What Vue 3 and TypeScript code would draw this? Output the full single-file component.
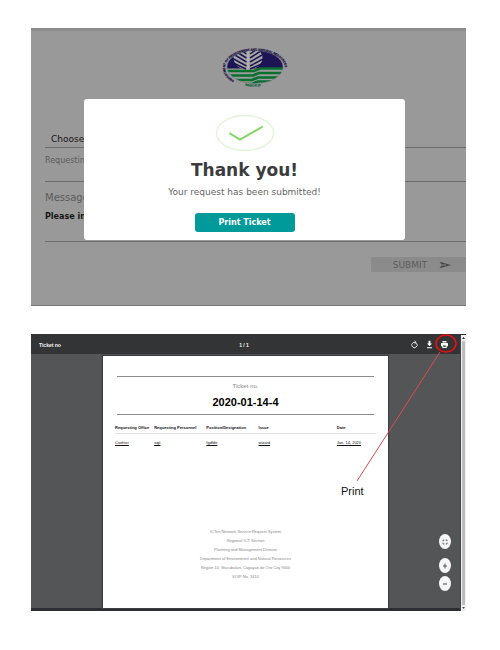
<script setup lang="ts">
import { ref } from 'vue'

interface Ticket {
  office: string
  personnel: string
  position: string
  issue: string
  date: string
}

const requester = ref('')
const message = ref('Please in')
const columns: string[] = ['Requesting Office', 'Requesting Personnel', 'Position/Designation', 'Issue', 'Date']
const tickets: Ticket[] = [
  { office: 'Cashier', personnel: 'sqjt', position: 'fgdfde', issue: 'wizard', date: 'Jan. 14, 2020' },
]
const footer: string[] = [
  'ICTen Network Service Request System',
  'Regional ICT Section',
  'Planning and Management Division',
  'Department of Environment and Natural Resources',
  'Region 10, Macabalan, Cagayan de Oro City 9000',
  'VOIP No. 3410',
]
</script>

<template>
  <main class="page">
    <section class="request">
      <svg class="seal" width="68" height="42" viewBox="0 0 68 42" role="img">
        <defs>
          <clipPath id="disc"><ellipse cx="33" cy="21" rx="28" ry="16.5" /></clipPath>
          <clipPath id="leaf"><ellipse cx="26" cy="13" rx="15" ry="12" /></clipPath>
          <path id="ring" d="M12 34.500A30 17.500 0 1 1 54 34.500" />
          <path id="foot" d="M23 39.500Q33 42 46 38.500" />
        </defs>
        <g clip-path="url(#disc)">
          <rect width="68" height="42" fill="#9b9b9b" />
          <rect width="68" height="22.500" fill="#1d1455" />
          <ellipse cx="26" cy="12" rx="14.500" ry="11.500" fill="#a6a6a2" />
          <g clip-path="url(#leaf)" fill="none" stroke="#1d1455" stroke-width="1.500">
            <path d="M24.500 8L17 3M24.500 12L13 5M24.500 16L11 8M24.500 20L10 12M24 23L9 16M28 8L35 3M28 12L38 5.500M28 16L40 9M28 20L41 13M28 23L42 17" />
          </g>
          <path d="M26 3V25" stroke="#b3b3ae" stroke-width="1.600" />
          <g fill="none" stroke="#08702f" stroke-width="2.700">
            <path d="M0 25H32L38 22.500H68" />
            <path d="M0 29.500H31L37 27H68" />
            <path d="M0 34H30L36 31.500H68" />
            <path d="M0 38H30L36 35.500H68" />
          </g>
        </g>
        <ellipse cx="33" cy="21" rx="28" ry="16.500" fill="none" stroke="#777585" stroke-width=".5" />
        <text class="seal-name"><textPath href="#ring">DEPARTMENT OF ENVIRONMENT AND NATURAL RESOURCES</textPath></text>
        <text class="seal-region"><textPath href="#foot">REGION 10</textPath></text>
      </svg>

      <form class="form" @submit.prevent>
        <select class="choice" aria-label="Choose"><option>Choose</option></select>
        <div class="field">
          <label for="requester">Requesting</label>
          <input id="requester" v-model="requester" type="text" />
        </div>
        <div class="field message">
          <label for="message">Message</label>
          <textarea id="message" v-model="message" rows="1"></textarea>
        </div>
        <button class="submit" type="submit">
          SUBMIT
          <svg width="12" height="8" viewBox="0 0 12 8"><path d="M.5 .8L12 4L.5 7.200L2.500 4.500H7V3.500H2.500Z" fill="#484848" /></svg>
        </button>
      </form>

      <div class="dialog" role="dialog" aria-labelledby="thanks">
        <svg width="60" height="38" viewBox="0 0 60 38">
          <ellipse cx="30" cy="19" rx="28.500" ry="17.500" fill="none" stroke="#e0f5d8" stroke-width="1.300" />
          <path d="M15 19.500L25 25.500L47 13" fill="none" stroke="#7fd660" stroke-width="2" stroke-linecap="round" />
        </svg>
        <h1 id="thanks">Thank you!</h1>
        <p>Your request has been submitted!</p>
        <button class="print-ticket" type="button">Print Ticket</button>
      </div>
    </section>

    <section class="viewer">
      <div class="screen">
        <header class="toolbar">
          <span class="name">Ticket no</span>
          <span class="count">1 / 1</span>
          <nav class="tools">
            <button type="button" aria-label="Rotate">
              <svg width="9" height="9" viewBox="0 0 9 9"><path d="M3 2.700A2.700 2.700 0 1 0 6.500 3.200M3 2.400H6M4.500 .8L6.200 2.400L4.500 4" fill="none" stroke="#eee" stroke-width=".9" /></svg>
            </button>
            <button type="button" aria-label="Download">
              <svg width="9" height="9" viewBox="0 0 9 9"><path d="M3.500 .8H5.500V3.500H7L4.500 6.300L2 3.500H3.500ZM2 7.200H7V8.200H2Z" fill="#fff" /></svg>
            </button>
            <button type="button" aria-label="Print">
              <svg width="9" height="9" viewBox="0 0 9 9"><path d="M2.500 1H6.500V2.500H2.500ZM1.500 3H7.500Q8 3 8 3.600V6.200H6.700V8H2.300V6.200H1V3.600Q1 3 1.500 3Z" fill="#fff" /><path d="M3.200 5.300H5.800V7H3.200Z" fill="#555" /></svg>
            </button>
          </nav>
        </header>
        <div class="desk">
          <article class="sheet">
            <div class="heading">
              <p>Ticket no.</p>
              <h2>2020-01-14-4</h2>
            </div>
            <table>
              <colgroup><col class="c1" /><col class="c2" /><col class="c3" /><col class="c4" /><col /></colgroup>
              <thead><tr><th v-for="c in columns" :key="c" scope="col">{{ c }}</th></tr></thead>
              <tbody>
                <tr v-for="t in tickets" :key="t.office">
                  <td>{{ t.office }}</td><td>{{ t.personnel }}</td><td>{{ t.position }}</td><td>{{ t.issue }}</td><td>{{ t.date }}</td>
                </tr>
              </tbody>
            </table>
            <footer><p v-for="line in footer" :key="line">{{ line }}</p></footer>
          </article>
          <div class="zoom">
            <button type="button" aria-label="Fit to page"><svg width="6" height="6" viewBox="0 0 6 6"><path d="M1 2.300V1H2.300M3.700 1H5V2.300M5 3.700V5H3.700M2.300 5H1V3.700" fill="none" stroke="#444" stroke-width=".8" /></svg></button>
            <button type="button" aria-label="Zoom in"><svg width="6" height="6" viewBox="0 0 6 6"><path d="M3 .5V5.500M1 3H5" stroke="#555" stroke-width="1" /></svg></button>
            <button type="button" aria-label="Zoom out"><svg width="6" height="6" viewBox="0 0 6 6"><path d="M1 3H5" stroke="#444" stroke-width="1" /></svg></button>
          </div>
        </div>
      </div>
      <div class="scrollbar">
        <svg width="5" height="6" viewBox="0 0 5 6"><path d="M1 4H4L2.500 2Z" fill="#333" /></svg>
        <span class="thumb"></span>
        <svg width="5" height="6" viewBox="0 0 5 6"><path d="M1 2H4L2.500 4Z" fill="#555" /></svg>
      </div>
      <div class="note">
        <svg width="110" height="150" viewBox="0 0 110 150" fill="none">
          <ellipse cx="90" cy="8.500" rx="10" ry="8.500" stroke="#ee0d12" stroke-width="1.600" />
          <path d="M84 17L1 146" stroke="#dd4a50" stroke-width="1" />
        </svg>
        <span>Print</span>
      </div>
    </section>
  </main>
</template>

<style>
body {
  margin: 0;
  background: #fff;
}
</style>

<style scoped>
* {
  box-sizing: border-box;
}
h1, h2, p {
  margin: 0;
}
svg {
  display: block;
  flex: none;
  overflow: visible;
}
button, input, select, textarea {
  margin: 0;
  padding: 0;
  border: 0;
  border-radius: 0;
  background: none;
  font: inherit;
  color: inherit;
}
.page {
  display: flex;
  flex-direction: column;
  gap: 28px;
  padding: 28px 34px 38px 31px;
  font-family: "Liberation Sans", Arial, sans-serif;
}
.request {
  position: relative;
  display: flex;
  flex-direction: column;
  align-items: center;
  padding: 15px 0 33px 14px;
  border-top: 3px solid #8d8d8d;
  border-bottom: 1px solid #777;
  background: #999;
  font-family: "DejaVu Sans", sans-serif;
}
.seal-name, .seal-region {
  font: bold 3px "Liberation Sans", sans-serif;
  fill: #1b1344;
  stroke: #1b1344;
  stroke-width: .2px;
}
.seal-region {
  fill: #14603a;
  stroke: #14603a;
}
.form {
  display: flex;
  flex-direction: column;
  align-self: stretch;
  margin-top: 42px;
}
.choice {
  height: 18px;
  padding-left: 6px;
  border-bottom: 1px solid #6e6e6e;
  appearance: none;
  font-size: 9px;
  color: #161616;
}
.field {
  display: flex;
  flex-direction: column;
  height: 34px;
  padding-top: 8px;
  border-bottom: 1px solid #6e6e6e;
  font-size: 8px;
  line-height: 10px;
  color: #5c5c5c;
}
.field input {
  height: 12px;
}
.message {
  height: 60px;
  padding-top: 10px;
  gap: 7px;
  font-size: 10px;
  line-height: 12px;
}
.message textarea {
  height: 14px;
  overflow: hidden;
  resize: none;
  font-size: 8px;
  font-weight: bold;
  color: #161616;
}
.submit {
  display: flex;
  align-items: center;
  justify-content: center;
  align-self: flex-end;
  gap: 12px;
  width: 95px;
  height: 15px;
  margin-top: 15px;
  padding-left: 7px;
  background: #8b8b8b;
  font-size: 9px;
  color: #5d5d5d;
}
.dialog {
  position: absolute;
  top: 68px;
  left: 53px;
  right: 61px;
  display: flex;
  flex-direction: column;
  align-items: center;
  padding: 15px 0 8px;
  border-radius: 3px;
  background: #fff;
  color: #3c3c3c;
}
.dialog h1 {
  margin-top: 8px;
  font-size: 17px;
  line-height: 20px;
}
.dialog p {
  margin-top: 6px;
  font-size: 9px;
  line-height: 12px;
  color: #666;
}
.print-ticket {
  width: 100px;
  height: 19px;
  margin-top: 15px;
  border-radius: 3px;
  background: #009a9a;
  font-size: 8px;
  font-weight: bold;
  color: #fff;
}
.viewer {
  position: relative;
  display: flex;
  border-top: 1px solid #333;
}
.screen {
  flex: 1;
  border-bottom: 3px solid #2b2e33;
}
.toolbar {
  display: grid;
  grid-template-columns: 1fr auto 1fr;
  align-items: center;
  height: 19px;
  padding: 0 11px;
  padding-left: 8px;
  background: #333436;
  font-size: 5px;
  font-weight: bold;
  color: #f5f5f5;
}
.tools {
  display: flex;
  justify-content: flex-end;
  gap: 6px;
}
.desk {
  position: relative;
  padding: 2px 72px 0;
  background: #545557;
}
.sheet {
  display: flex;
  flex-direction: column;
  min-height: 252px;
  padding: 20px 12px 27px;
  background: #fff;
  box-shadow: 0 0 1px 1px #3d3e40;
}
.heading {
  margin: 0 2px;
  padding: 3px 0 4px;
  border-top: 1px solid #8b8b8b;
  border-bottom: 1px solid #8b8b8b;
  text-align: center;
}
.heading p {
  font-size: 6px;
  line-height: 12px;
  color: #888;
}
.heading h2 {
  margin-top: 2px;
  font-size: 11px;
  line-height: 16px;
  color: #000;
}
table {
  margin-top: 9px;
  border-collapse: collapse;
  table-layout: fixed;
  width: 100%;
  font-size: 4px;
  line-height: 8px;
  color: #111;
}
.c1 { width: 15%; }
.c2 { width: 20%; }
.c3 { width: 20%; }
.c4 { width: 30%; }
th, td {
  padding: 0;
  text-align: left;
  white-space: nowrap;
}
th {
  padding-bottom: 1px;
  border-bottom: 1px solid #e2e2e2;
}
td {
  padding-top: 5px;
  text-decoration: underline;
}
footer {
  margin-top: auto;
  text-align: center;
  font-size: 4px;
  line-height: 9px;
  color: #888;
}
.zoom {
  position: absolute;
  right: 9px;
  bottom: 17px;
  display: flex;
  flex-direction: column;
  gap: 3px;
}
.zoom button {
  display: grid;
  place-items: center;
  width: 12px;
  height: 15px;
  border-radius: 50%;
  background: #f7f7f7;
}
.zoom button:first-child {
  margin-bottom: 6px;
}
.scrollbar {
  display: flex;
  flex-direction: column;
  align-items: center;
  width: 6px;
  border-left: 1px solid #444;
  background: #f0f0f0;
}
.thumb {
  flex: 1;
  width: 3px;
  background: #bdbdbd;
}
.note {
  position: absolute;
  top: 0;
  right: 0;
  width: 110px;
}
.note span {
  position: absolute;
  top: 149px;
  left: -15px;
  font-size: 11px;
  line-height: 14px;
  color: #111;
}
</style>
